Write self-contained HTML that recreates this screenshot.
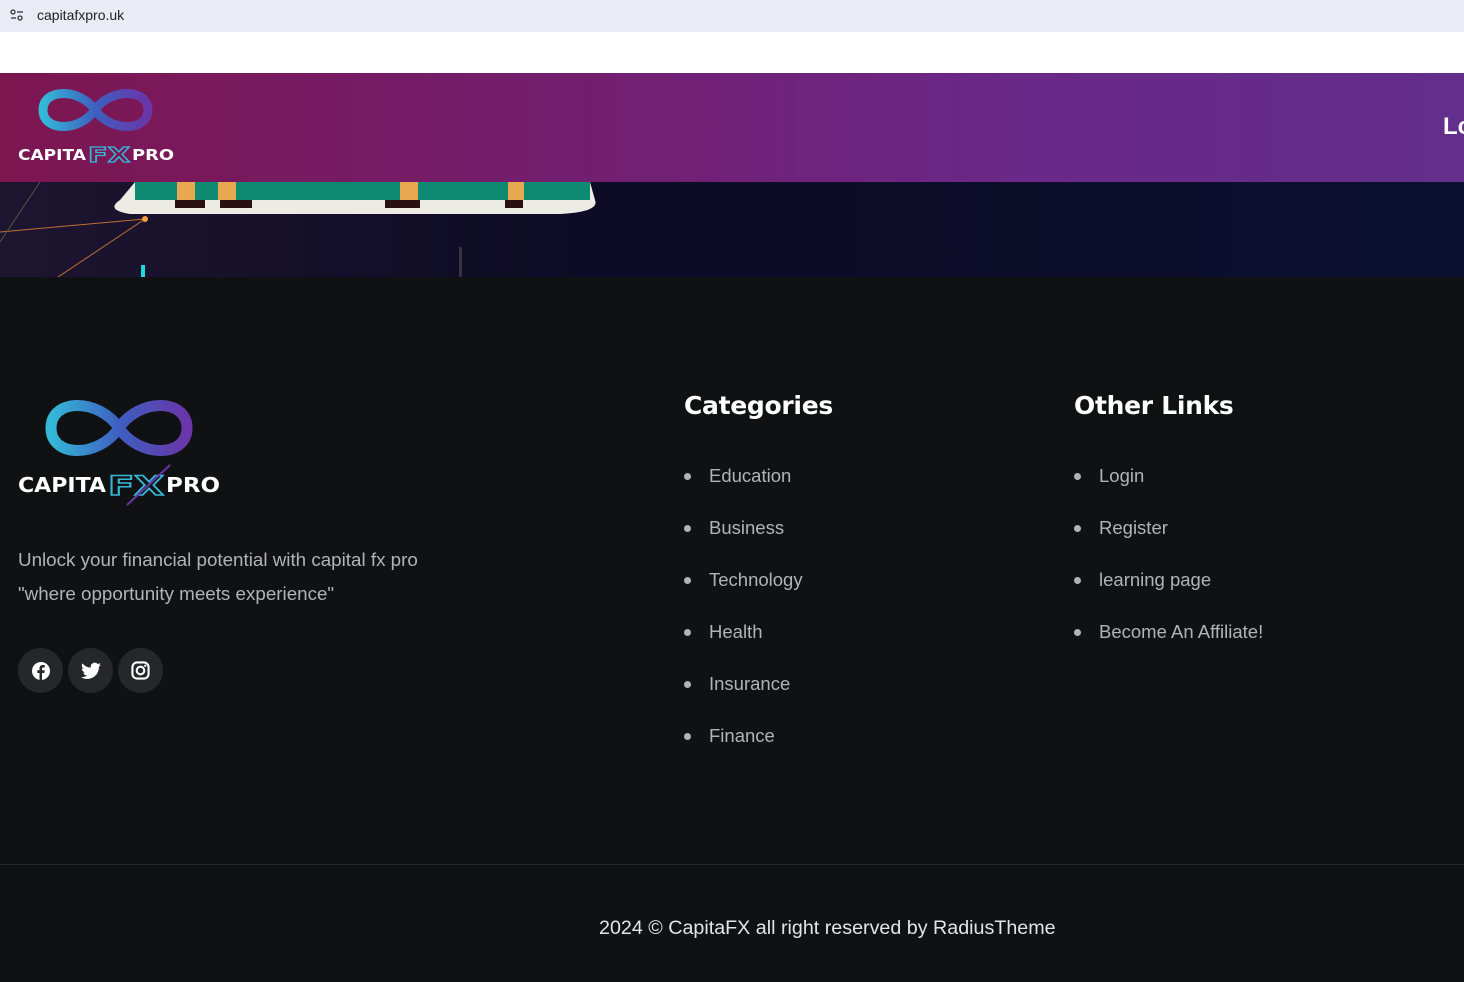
<!DOCTYPE html>
<html><head><meta charset="utf-8"><style>
*{margin:0;padding:0;box-sizing:border-box}
body{width:1464px;height:982px;overflow:hidden;background:#101113;font-family:"Liberation Sans",sans-serif;position:relative}
.abs{position:absolute}
.bar{left:0;top:0;width:1464px;height:32px;background:#e9ecf5}
.url{left:37px;top:7px;font-size:14px;color:#222}
.white{left:0;top:32px;width:1464px;height:41px;background:#fff}
.hdr{left:0;top:73px;width:1464px;height:109px;background:linear-gradient(90deg,#7c1650 0%,#741d6c 35%,#6a2888 70%,#632e8c 100%)}
.hero{left:0;top:182px;width:1464px;height:95px;background:linear-gradient(90deg,#1e1530 0%,#0d0b25 40%,#0c1030 100%)}
h3{position:absolute;color:#fff;font-size:25px;font-weight:bold;font-family:"DejaVu Sans","Liberation Sans",sans-serif;letter-spacing:-0.3px}
ul{position:absolute;list-style:none}
li{color:#b3b3b3;font-size:18.5px;height:52px;line-height:24px;position:relative;padding-left:25px}
li:before{content:"";position:absolute;left:0;top:9px;width:7px;height:7px;border-radius:50%;background:#b3b3b3}
.p{left:18px;color:#b3b3b3;font-size:18.8px}
.soc{top:648px;width:45px;height:45px;border-radius:50%;background:#26272a;display:flex;align-items:center;justify-content:center}
.line{left:0;top:864px;width:1464px;height:1px;background:#26272a}
.copy{top:917px;color:#e4e4e4;font-size:19.7px;left:599px}
</style></head><body>
<div class="abs bar"></div>
<svg class="abs" style="left:10px;top:9px" width="14" height="12"><circle cx="3" cy="3" r="2" fill="none" stroke="#333" stroke-width="1.3"/><line x1="7" y1="3" x2="13" y2="3" stroke="#333" stroke-width="1.3"/><circle cx="10" cy="9" r="2" fill="none" stroke="#333" stroke-width="1.3"/><line x1="1" y1="9" x2="6" y2="9" stroke="#333" stroke-width="1.3"/></svg>
<div class="abs url">capitafxpro.uk</div>
<div class="abs white"></div>
<div class="abs hdr"></div>
<div class="abs" style="left:1443px;top:113px;color:#fff;font-size:24px;font-weight:bold">Lo</div>
<div class="abs hero">
<svg width="1464" height="95">
<line x1="0" y1="50" x2="145" y2="37" stroke="#c07030" stroke-width="1"/>
<line x1="58" y1="95" x2="145" y2="37" stroke="#c07030" stroke-width="1"/>
<line x1="40" y1="0" x2="0" y2="60" stroke="#554" stroke-width="1"/>
<circle cx="145" cy="37" r="3" fill="#f0a040"/>
<path d="M135 0 H590 L595 18 Q600 30 560 32 H130 Q105 28 120 18 Z" fill="#ecebe4"/>
<rect x="135" y="0" width="455" height="18" fill="#0e8a72"/>
<rect x="177" y="0" width="18" height="18" fill="#e8a850"/><rect x="218" y="0" width="18" height="18" fill="#e8a850"/>
<rect x="400" y="0" width="18" height="18" fill="#e8a850"/><rect x="508" y="0" width="16" height="18" fill="#e8a850"/>
<rect x="175" y="18" width="30" height="8" fill="#2a1010"/><rect x="220" y="18" width="32" height="8" fill="#2a1010"/>
<rect x="385" y="18" width="35" height="8" fill="#2a1010"/><rect x="505" y="18" width="18" height="8" fill="#2a1010"/>
<rect x="141" y="83" width="4" height="12" fill="#20d8e0"/>
<rect x="459" y="65" width="3" height="30" fill="#3a3040"/>
</svg></div>

<svg class="abs" style="left:15px;top:80px" width="170" height="95">
<defs><linearGradient id="g1" x1="0" x2="1"><stop offset="0" stop-color="#35b8d8"/><stop offset=".5" stop-color="#3d5fc0"/><stop offset="1" stop-color="#6a35a8"/></linearGradient></defs>
<path d="M80 30 C95 8 133 8 133 30 C133 52 95 52 80 30 C65 8 28 8 28 30 C28 52 65 52 80 30Z" fill="none" stroke="url(#g1)" stroke-width="9"/>
<text x="3" y="80" font-family="DejaVu Sans,sans-serif" font-weight="bold" font-size="15" fill="#fff" textLength="68" lengthAdjust="spacingAndGlyphs">CAPITA</text>
<text x="73" y="82" font-family="DejaVu Sans,sans-serif" font-weight="bold" font-size="20" fill="none" stroke="#35b8d8" stroke-width="1.2" textLength="42" lengthAdjust="spacingAndGlyphs">FX</text>
<text x="117" y="80" font-family="DejaVu Sans,sans-serif" font-weight="bold" font-size="15" fill="#fff" textLength="42" lengthAdjust="spacingAndGlyphs">PRO</text>
</svg>

<svg class="abs" style="left:15px;top:390px" width="215" height="120">
<defs><linearGradient id="g2" x1="0" x2="1"><stop offset="0" stop-color="#35b8d8"/><stop offset=".5" stop-color="#3d5fc0"/><stop offset="1" stop-color="#6a35a8"/></linearGradient></defs>
<path d="M104 38 C124 8 172 8 172 38 C172 68 124 68 104 38 C84 8 36 8 36 38 C36 68 84 68 104 38Z" fill="none" stroke="url(#g2)" stroke-width="11"/>
<text x="3" y="102" font-family="DejaVu Sans,sans-serif" font-weight="bold" font-size="20" fill="#fff" textLength="88" lengthAdjust="spacingAndGlyphs">CAPITA</text>
<text x="93" y="105" font-family="DejaVu Sans,sans-serif" font-weight="bold" font-size="27" fill="none" stroke="#35b8d8" stroke-width="1.5" textLength="56" lengthAdjust="spacingAndGlyphs">FX</text>
<line x1="112" y1="115" x2="155" y2="75" stroke="#6a35a8" stroke-width="2"/>
<text x="151" y="102" font-family="DejaVu Sans,sans-serif" font-weight="bold" font-size="20" fill="#fff" textLength="54" lengthAdjust="spacingAndGlyphs">PRO</text>
</svg>

<div class="abs p" style="top:549px">Unlock your financial potential with capital fx pro</div>
<div class="abs p" style="top:583px">"where opportunity meets experience"</div>
<div class="abs soc" style="left:18px"><svg width="20" height="20" viewBox="0 0 20 20"><circle cx="10" cy="10" r="9" fill="#fff"/><path d="M11 19V12h2.3l.4-2.7H11V7.8c0-.8.3-1.3 1.4-1.3h1.4V4.1c-.3 0-1.1-.1-2-.1-2 0-3.3 1.2-3.300 3.4v1.9H6.3V12h2.2v7z" fill="#26272a"/></svg></div>
<div class="abs soc" style="left:68px"><svg width="20" height="18" viewBox="0 0 24 20"><path d="M24 2.4a10 10 0 0 1-2.8.8A5 5 0 0 0 23.3.4a10 10 0 0 1-3.1 1.2A4.9 4.9 0 0 0 11.8 6 14 14 0 0 1 1.7.9a4.9 4.9 0 0 0 1.5 6.6A4.9 4.9 0 0 1 1 6.9a4.9 4.9 0 0 0 3.9 4.9 5 5 0 0 1-2.2.1 4.9 4.9 0 0 0 4.6 3.4A9.9 9.9 0 0 1 0 17.3 14 14 0 0 0 7.5 19.5c9.1 0 14-7.5 14-14v-.6A10 10 0 0 0 24 2.4z" fill="#fff"/></svg></div>
<div class="abs soc" style="left:118px"><svg width="19" height="19" viewBox="0 0 20 20"><rect x="1.5" y="1.5" width="17" height="17" rx="5" fill="none" stroke="#fff" stroke-width="2.2"/><circle cx="10" cy="10" r="4" fill="none" stroke="#fff" stroke-width="2.2"/><circle cx="15" cy="5" r="1.2" fill="#fff"/></svg></div>

<h3 style="left:684px;top:391px">Categories</h3>
<ul style="left:684px;top:464px"><li>Education</li><li>Business</li><li>Technology</li><li>Health</li><li>Insurance</li><li>Finance</li></ul>
<h3 style="left:1074px;top:391px">Other Links</h3>
<ul style="left:1074px;top:464px"><li>Login</li><li>Register</li><li>learning page</li><li>Become An Affiliate!</li></ul>

<div class="abs line"></div>
<div class="abs copy">2024 © CapitaFX all right reserved by RadiusTheme</div>
</body></html>
